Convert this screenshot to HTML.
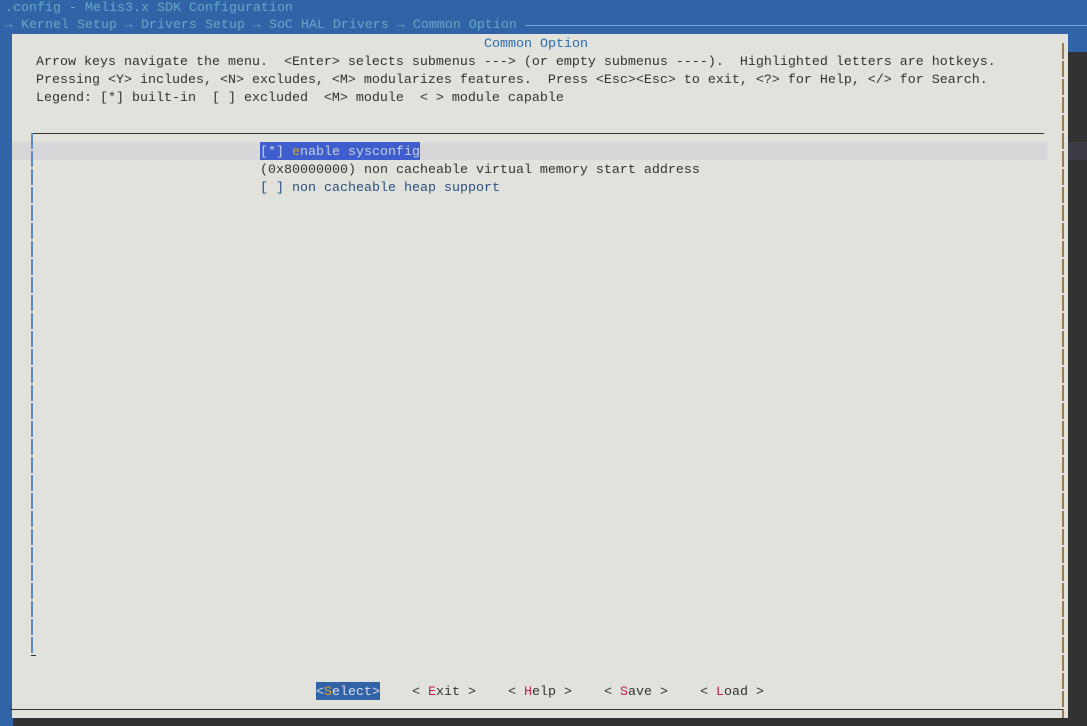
<!DOCTYPE html>
<html><head><style>
body{margin:0;width:1087px;height:726px;background:#3164a6;position:relative;overflow:hidden;font-family:"Liberation Mono",monospace;font-size:13.33px}
.t{position:absolute;white-space:pre;line-height:18px;height:18px}
.d{color:#333}
.tx{position:absolute;white-space:pre;line-height:18px;padding-top:2px;height:16px}
</style></head><body>
<div class="t" style="left:5px;top:0px;color:#63aac4">.config - Melis3.x SDK Configuration</div>
<div class="t" style="left:5px;top:17px;color:#63aac4">→ Kernel Setup → Drivers Setup → SoC HAL Drivers → Common Option</div>
<div style="position:absolute;left:525px;top:25px;width:562px;height:1px;background:#6aaedb"></div>
<div style="position:absolute;left:1068px;top:52px;width:19px;height:674px;background:#323232"></div>
<div style="position:absolute;left:13px;top:718px;width:1074px;height:8px;background:#323232"></div>
<div style="position:absolute;left:12px;top:34px;width:1056px;height:684px;background:#e1e2dc"></div>
<div style="position:absolute;left:12px;top:142px;width:1035px;height:18px;background:#d7d7da"></div>
<div style="position:absolute;left:1068px;top:142px;width:19px;height:18px;background:#3c3c46"></div>
<div class="t" style="left:484px;top:36px;color:#2e6bb0">Common Option</div>
<div class="t d" style="left:36px;top:54px">Arrow keys navigate the menu.  &lt;Enter&gt; selects submenus ---&gt; (or empty submenus ----).  Highlighted letters are hotkeys.</div>
<div class="t d" style="left:36px;top:72px">Pressing &lt;Y&gt; includes, &lt;N&gt; excludes, &lt;M&gt; modularizes features.  Press &lt;Esc&gt;&lt;Esc&gt; to exit, &lt;?&gt; for Help, &lt;/&gt; for Search.</div>
<div class="t d" style="left:36px;top:90px">Legend: [*] built-in  [ ] excluded  &lt;M&gt; module  &lt; &gt; module capable</div>
<div style="position:absolute;left:31px;top:133px;width:1013px;height:1px;background:#333"></div>
<div style="position:absolute;left:31px;top:133px;width:2px;height:522px;background:repeating-linear-gradient(#5b8cc4 0 16px,transparent 16px 18px)"></div>
<div style="position:absolute;left:31px;top:655px;width:5px;height:1px;background:#333"></div>
<div style="position:absolute;left:1062px;top:43px;width:2px;height:675px;background:repeating-linear-gradient(#9a7a55 0 16px,transparent 16px 18px)"></div>
<div style="position:absolute;left:10px;top:709px;width:1053px;height:1px;background:#333"></div>
<div class="tx" style="left:260px;top:142px;background:#3d5ecc;color:#c9d0e4">[*] <span style="color:#e0a020">e</span>nable sysconfig</div>
<div class="t d" style="left:260px;top:162px">(0x80000000) non cacheable virtual memory start address</div>
<div class="t" style="left:260px;top:180px;color:#2c4f80">[ ] non cacheable heap support</div>
<div class="tx" style="left:316px;top:682px;background:#3164a6;color:#dde">&lt;<span style="color:#e0a020">S</span>elect&gt;</div>
<div class="t d" style="left:412px;top:684px">&lt; <span style="color:#c0204f">E</span>xit &gt;</div>
<div class="t d" style="left:508px;top:684px">&lt; <span style="color:#c0204f">H</span>elp &gt;</div>
<div class="t d" style="left:604px;top:684px">&lt; <span style="color:#c0204f">S</span>ave &gt;</div>
<div class="t d" style="left:700px;top:684px">&lt; <span style="color:#c0204f">L</span>oad &gt;</div>
</body></html>
